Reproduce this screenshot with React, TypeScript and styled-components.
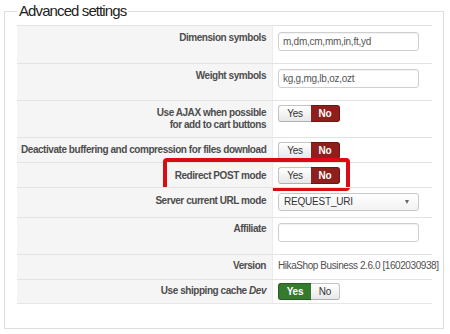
import React from "react";
import styled, { createGlobalStyle, css } from "styled-components";

const GlobalStyle = createGlobalStyle`
  html, body { margin: 0; padding: 0; background: #fff; }
  body { font-family: "Liberation Sans", Arial, sans-serif; }
  * { box-sizing: border-box; }
`;

const Fieldset = styled.fieldset`
  width: 440px;
  margin: 1px 0 0 4px;
  padding: 4px 11px 24px 12px;
  border: 1px solid #dedede;
  border-radius: 0;
  min-width: 0;
`;

const Legend = styled.legend`
  padding: 0 2px;
  margin: 0;
  font-size: 15px;
  line-height: 20px;
  letter-spacing: -0.9px;
  color: #222;
`;

const Table = styled.div`
  display: flex;
  flex-direction: column;
  border-bottom: 1px solid #e6e6e6;
`;

const Row = styled.div<{ $h: number }>`
  position: relative;
  display: grid;
  grid-template-columns: 256px 1fr;
  height: ${(p) => p.$h}px;
  border-top: 1px solid #e3e3e3;
`;

const Label = styled.div<{ $pt?: number }>`
  background: #f5f5f5;
  border-right: 1px solid #ececec;
  padding: ${(p) => p.$pt ?? 6}px 6px 0 4px;
  text-align: right;
  font-size: 10px;
  line-height: 12px;
  font-weight: bold;
  letter-spacing: -0.45px;
  color: #4d4d4d;
  white-space: nowrap;
  em { font-style: italic; }
`;

const Value = styled.div<{ $pt?: number }>`
  padding: ${(p) => p.$pt ?? 5}px 0 0 5px;
  font-size: 10px;
  line-height: 12px;
  color: #555;
  white-space: nowrap;
`;

const ValueText = styled.span`
  letter-spacing: -0.42px;
  color: #505050;
`;

const TextInput = styled.div`
  width: 141px;
  height: 19px;
  border: 1px solid #cfcfcf;
  border-radius: 3px;
  padding: 3px 0 0 4px;
  font-size: 10px;
  line-height: 12px;
  letter-spacing: -0.25px;
  color: #555;
  background: #fff;
  box-shadow: inset 0 1px 1px rgba(0, 0, 0, 0.06);
`;

const Select = styled.div`
  width: 141px;
  height: 18px;
  border: 1px solid #c8c8c8;
  border-radius: 3px;
  padding: 0 6px 0 5px;
  display: flex;
  align-items: center;
  justify-content: space-between;
  font-size: 10px;
  letter-spacing: -0.2px;
  color: #333;
  background: linear-gradient(#ffffff, #f2f2f2);
`;

const Caret = styled.span`
  width: 0;
  height: 0;
  border-left: 2.5px solid transparent;
  border-right: 2.5px solid transparent;
  border-top: 4px solid #666;
  margin-right: 3px;
`;

const Toggle = styled.div`
  display: inline-flex;
  height: 17px;
`;

const tone = {
  off: css`
    background: linear-gradient(#ffffff, #e8e8e8);
    color: #333;
    border: 1px solid #c4c4c4;
    border-bottom-color: #b0b0b0;
  `,
  red: css`
    background: #8e1f1c;
    color: #fff;
    font-weight: bold;
    border: 1px solid #6f1512;
  `,
  green: css`
    background: #367a2e;
    color: #fff;
    font-weight: bold;
    border: 1px solid #275d21;
  `,
};

const ToggleBtn = styled.span<{ $w: number; $tone: keyof typeof tone; $first?: boolean }>`
  width: ${(p) => p.$w}px;
  height: 17px;
  display: flex;
  align-items: center;
  justify-content: center;
  font-size: 10px;
  letter-spacing: -0.2px;
  ${(p) => tone[p.$tone]};
  border-radius: ${(p) => (p.$first ? "3px 0 0 3px" : "0 3px 3px 0")};
  ${(p) => (p.$first ? "border-right: none;" : "border-left: none;")}
`;

const Highlight = styled.div`
  position: absolute;
  left: 146px;
  top: -5px;
  width: 187px;
  height: 33px;
  border: 4px solid #dc0a12;
  border-radius: 4px;
  pointer-events: none;
`;

type YN = "yes" | "no";

function YesNo({ value }: { value: YN }) {
  return (
    <Toggle>
      <ToggleBtn $first $w={33} $tone={value === "yes" ? "green" : "off"}>
        Yes
      </ToggleBtn>
      <ToggleBtn $w={29} $tone={value === "no" ? "red" : "off"}>
        No
      </ToggleBtn>
    </Toggle>
  );
}

export default function App() {
  return (
    <>
      <GlobalStyle />
      <Fieldset>
        <Legend>Advanced settings</Legend>
        <Table>
          <Row $h={38}>
            <Label>Dimension symbols</Label>
            <Value $pt={6}>
              <TextInput>m,dm,cm,mm,in,ft,yd</TextInput>
            </Value>
          </Row>
          <Row $h={37}>
            <Label>Weight symbols</Label>
            <Value>
              <TextInput>kg,g,mg,lb,oz,ozt</TextInput>
            </Value>
          </Row>
          <Row $h={37}>
            <Label>
              Use AJAX when possible
              <br />
              for add to cart buttons
            </Label>
            <Value $pt={4}>
              <YesNo value="no" />
            </Value>
          </Row>
          <Row $h={25}>
            <Label>Deactivate buffering and compression for files download</Label>
            <Value $pt={4}>
              <YesNo value="no" />
            </Value>
          </Row>
          <Row $h={25}>
            <Label $pt={7}>Redirect POST mode</Label>
            <Value $pt={4}>
              <YesNo value="no" />
            </Value>
            <Highlight />
          </Row>
          <Row $h={30}>
            <Label $pt={7}>Server current URL mode</Label>
            <Value>
              <Select>
                REQUEST_URI
                <Caret />
              </Select>
            </Value>
          </Row>
          <Row $h={37}>
            <Label $pt={5}>Affiliate</Label>
            <Value>
              <TextInput />
            </Value>
          </Row>
          <Row $h={25}>
            <Label $pt={5}>Version</Label>
            <Value>
              <ValueText>HikaShop Business 2.6.0 [1602030938]</ValueText>
            </Value>
          </Row>
          <Row $h={24}>
            <Label $pt={5}>
              Use shipping cache <em>Dev</em>
            </Label>
            <Value $pt={3}>
              <YesNo value="yes" />
            </Value>
          </Row>
        </Table>
      </Fieldset>
    </>
  );
}
